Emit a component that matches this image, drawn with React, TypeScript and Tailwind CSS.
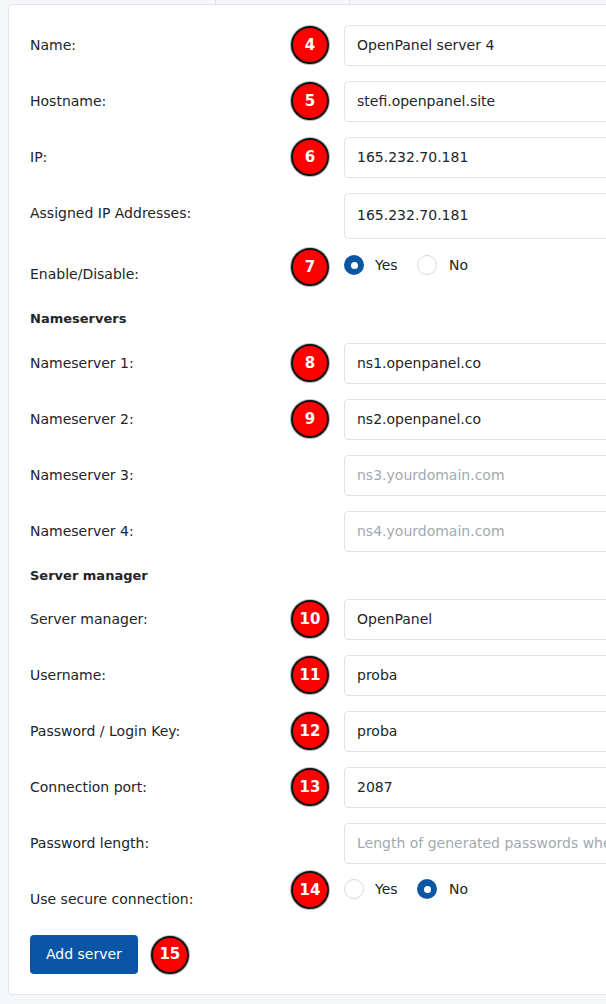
import React from 'react';

const Badge = ({ n }: { n: number }) => (
    <div className="w-[38px] h-[38px] rounded-full bg-[#ff0000] border-2 border-[#111] shadow-[0_0_0_1px_#bbb] flex items-center justify-center text-white font-bold text-[15px]">
        {n}
    </div>
);

const Input = ({ value, placeholder, tall }: { value?: string; placeholder?: string; tall?: boolean }) => (
    <div className={`w-[300px] ${tall ? 'h-[46px] mt-[5px]' : 'h-[41px]'} border border-[#dfe3e8] rounded-[4px] bg-white flex items-center pl-[12px] text-[14px] whitespace-nowrap overflow-hidden ${value ? 'text-[#212529]' : 'text-[#a3a9b0]'}`}>
        {value || placeholder}
    </div>
);

const Radio = ({ checked }: { checked?: boolean }) => (
    <span className={`w-[20px] h-[20px] rounded-full inline-flex items-center justify-center ${checked ? 'bg-[#0b57a4]' : 'bg-white border border-[#d5d9de]'}`}>
        {checked && <span className="w-[7px] h-[7px] rounded-full bg-white" />}
    </span>
);

const Row = ({ label, badge, children }: { label: string; badge?: number; children: React.ReactNode }) => (
    <div className="flex items-center h-[56px]">
        <div className="w-[262px] text-[14px] text-[#212529]">{label}</div>
        <div className="w-[53px] flex -ml-[1px]">{badge && <Badge n={badge} />}</div>
        {children}
    </div>
);

const RadioRow = ({ label, badge, yes, labelPt, radioPt, badgePt }: { label: string; badge: number; yes: boolean; labelPt: string; radioPt: string; badgePt: string }) => (
    <div className="flex items-start h-[56px]">
        <div className={`w-[262px] text-[14px] leading-[20px] text-[#212529] ${labelPt}`}>{label}</div>
        <div className={`w-[53px] flex -ml-[1px] ${badgePt}`}><Badge n={badge} /></div>
        <div className={`flex items-center text-[14px] leading-[20px] text-[#212529] ${radioPt}`}>
            <Radio checked={yes} />
            <span className="ml-[11px] w-[42px]">Yes</span>
            <Radio checked={!yes} />
            <span className="ml-[12px]">No</span>
        </div>
    </div>
);

const Heading = ({ text, h }: { text: string; h: string }) => (
    <div className={`${h} text-[13px] leading-[16px] font-bold text-[#212529]`}>{text}</div>
);

export default function App() {
    return (
        <div className="w-[606px] h-[1004px] overflow-hidden bg-[#f5f7fb]" style={{ fontFamily: '"DejaVu Sans", sans-serif' }}>
            <div className="h-[4px] flex">
                <div className="w-[216px] border-r border-[#dde1e6]" />
                <div className="w-[134px] border-r border-[#dde1e6]" />
            </div>
            <div className="ml-[8px] w-[660px] h-[991px] bg-white border border-[#e1e4e8] rounded-[4px] pl-[21px] pt-[12px]">
                <Row label="Name:" badge={4}><Input value="OpenPanel server 4" /></Row>
                <Row label="Hostname:" badge={5}><Input value="stefi.openpanel.site" /></Row>
                <Row label="IP:" badge={6}><Input value="165.232.70.181" /></Row>
                <Row label="Assigned IP Addresses:"><Input value="165.232.70.181" tall /></Row>
                <RadioRow label="Enable/Disable:" badge={7} yes labelPt="pt-[23px]" radioPt="pt-[14px]" badgePt="pt-[7px]" />
                <Heading text="Nameservers" h="h-[38px] pt-[14px]" />
                <Row label="Nameserver 1:" badge={8}><Input value="ns1.openpanel.co" /></Row>
                <Row label="Nameserver 2:" badge={9}><Input value="ns2.openpanel.co" /></Row>
                <Row label="Nameserver 3:"><Input placeholder="ns3.yourdomain.com" /></Row>
                <Row label="Nameserver 4:"><Input placeholder="ns4.yourdomain.com" /></Row>
                <Heading text="Server manager" h="h-[32px] pt-[9px]" />
                <Row label="Server manager:" badge={10}><Input value="OpenPanel" /></Row>
                <Row label="Username:" badge={11}><Input value="proba" /></Row>
                <Row label="Password / Login Key:" badge={12}><Input value="proba" /></Row>
                <Row label="Connection port:" badge={13}><Input value="2087" /></Row>
                <Row label="Password length:"><Input placeholder="Length of generated passwords when creating accounts" /></Row>
                <RadioRow label="Use secure connection:" badge={14} yes={false} labelPt="pt-[18px]" radioPt="pt-[8px]" badgePt="pt-0" />
                <div className="flex items-center mt-[8px] gap-[13px]">
                    <button className="h-[39px] px-[16px] rounded-[4px] bg-[#0a55a5] text-white text-[14px]">Add server</button>
                    <Badge n={15} />
                </div>
            </div>
        </div>
    );
}
